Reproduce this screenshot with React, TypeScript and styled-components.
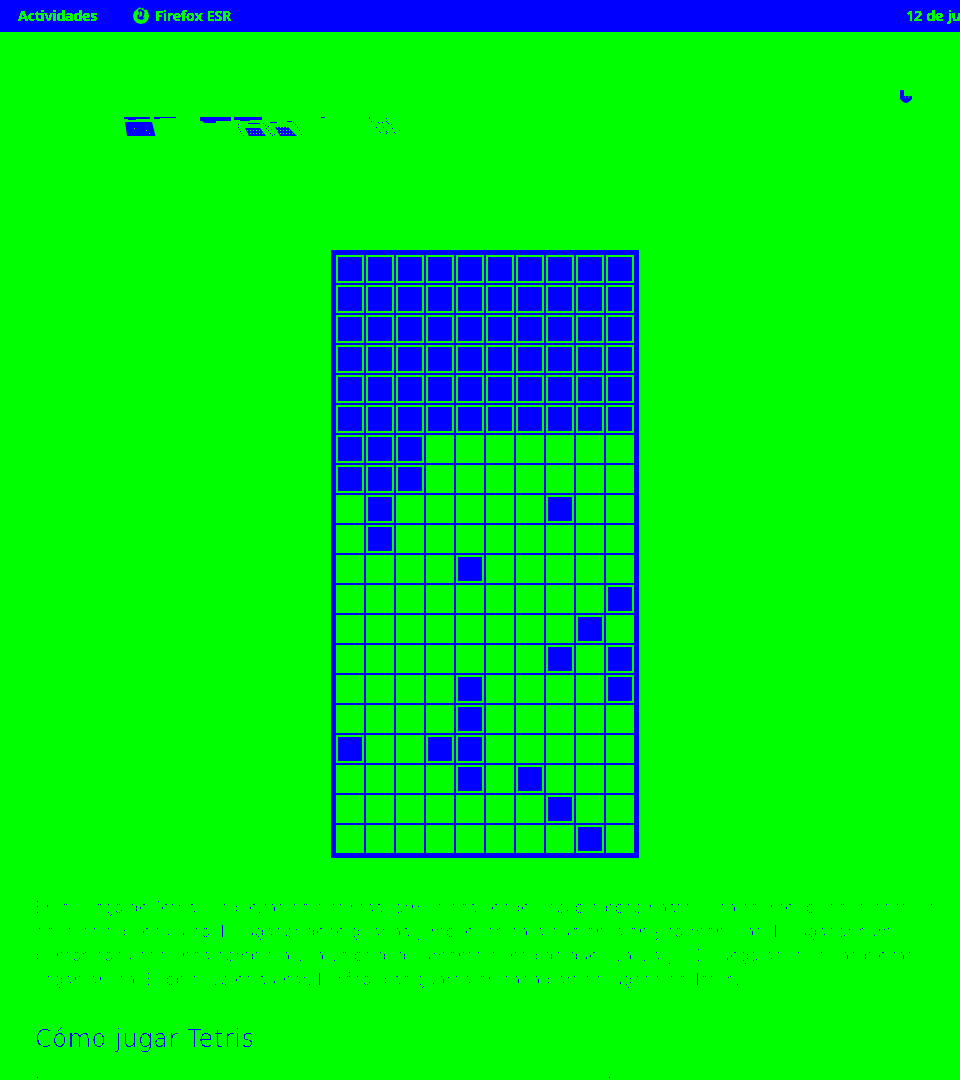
import React from "react";
import styled, { createGlobalStyle } from "styled-components";

const Global = createGlobalStyle`
  html, body { margin: 0; padding: 0; height: 1080px; overflow: hidden; background: #00ff00; }
  body { font-family: "DejaVu Sans", "Noto Sans", sans-serif; }
`;

const FilterDefs = styled.svg`
  display: block;
  width: 0;
  height: 0;
`;

const Page = styled.div`
  width: 960px;
  height: 1080px;
  overflow: hidden;
  background: #00ff00;
`;

const TopBar = styled.header`
  display: flex;
  align-items: center;
  height: 32px;
  padding: 0 0 2px 18px;
  box-sizing: border-box;
  background: #0000ff;
  overflow: hidden;
  white-space: nowrap;
`;

const BarLabel = styled.span`
  font-family: "Noto Sans", sans-serif;
  font-size: 14.3px;
  font-weight: 700;
  letter-spacing: -0.3px;
  word-spacing: 1px;
  color: #00ff00;
  filter: url(#bar-threshold);
`;

const AppMenu = styled.div`
  display: flex;
  align-items: center;
  gap: 6px;
  margin-left: 36px;
`;

const Clock = styled(BarLabel)`
  margin-left: 675px;
`;

const HeroArt = styled.svg`
  display: block;
  width: 960px;
  height: 218px;
`;

const BoardRow = styled.div`
  display: flex;
  justify-content: center;
  padding-left: 10px;
`;

const Board = styled.div`
  display: grid;
  grid-template-columns: repeat(10, 28px);
  grid-auto-rows: 28px;
  gap: 2px;
  border: 5px solid #0000ff;
  background: #0000ff;
`;

const Cell = styled.div<{ $filled: boolean }>`
  box-sizing: border-box;
  background: ${(p) => (p.$filled ? "#0000ff" : "#00ff00")};
  border: 2px solid #00ff00;
`;

const Article = styled.article`
  padding: 38px 16px 0 35px;
  color: #0000ff;
`;

const Paragraph = styled.p`
  margin: 0;
  font-size: 16px;
  line-height: 24px;
  font-weight: 200;
  filter: url(#copy-threshold);
`;

const Heading = styled.h2`
  margin: 29px 0 0;
  font-size: 24px;
  line-height: 36px;
  font-weight: 200;
  letter-spacing: 0.6px;
  filter: url(#heading-threshold);
`;

const NextParagraph = styled(Paragraph)`
  margin-top: 15px;
`;

const filled: Record<number, number[]> = {
  0: [0, 1, 2, 3, 4, 5, 6, 7, 8, 9],
  1: [0, 1, 2, 3, 4, 5, 6, 7, 8, 9],
  2: [0, 1, 2, 3, 4, 5, 6, 7, 8, 9],
  3: [0, 1, 2, 3, 4, 5, 6, 7, 8, 9],
  4: [0, 1, 2, 3, 4, 5, 6, 7, 8, 9],
  5: [0, 1, 2, 3, 4, 5, 6, 7, 8, 9],
  6: [0, 1, 2],
  7: [0, 1, 2],
  8: [1, 7],
  9: [1],
  10: [4],
  11: [9],
  12: [8],
  13: [7, 9],
  14: [4, 9],
  15: [4],
  16: [0, 3, 4],
  17: [4, 6],
  18: [7],
  19: [8],
};

const Threshold = ({ id, table }: { id: string; table: string }) => (
  <filter id={id} colorInterpolationFilters="sRGB" x="0" y="0" width="100%" height="100%">
    <feComponentTransfer>
      <feFuncA type="discrete" tableValues={table} />
    </feComponentTransfer>
  </filter>
);

const dots = (list: [number, number][]) =>
  list.map(([x, y], i) => <rect key={i} x={x} y={y} width="1" height="1" />);

const FoxIcon = () => (
  <svg width="16" height="17" viewBox="0 0 16 17" aria-hidden="true">
    <path
      fill="#00ff00"
      d="M5 1.5 L7 0 L8 2 L10 0.5 L11 3 L13.5 2.5 L15 5 L16 9 L15 13 L12 16 L8 17 L4 16 L1 13 L0 9 L1 5 L3 3 Z"
    />
    <path fill="#0000ff" d="M5 3 L7 2 L10 3 L11.5 5 L11 8.5 L10 10.5 L12 11 L9 13 L5 12 L4 9 L6 7 Z" />
    <path fill="#00ff00" d="M7 4 L9 5 L9 9 L6 10 L6.5 7.5 Z" />
  </svg>
);

export default function App() {
  return (
    <Page>
      <Global />
      <FilterDefs aria-hidden="true">
        <defs>
          <Threshold id="bar-threshold" table="0 1 1 1" />
          <Threshold id="copy-threshold" table="0 0 0 1" />
          <Threshold id="heading-threshold" table="0 1" />
        </defs>
      </FilterDefs>
      <TopBar>
        <BarLabel>Actividades</BarLabel>
        <AppMenu>
          <FoxIcon />
          <BarLabel>Firefox ESR</BarLabel>
        </AppMenu>
        <Clock>12 de jul 10:24</Clock>
      </TopBar>
      <HeroArt viewBox="0 0 960 218" aria-hidden="true" fill="#0000ff">
        <defs>
          <pattern id="dither" width="3" height="3" patternUnits="userSpaceOnUse">
            <path d="M0 0H3V3H0Z" />
            <rect x="1" y="1" width="1" height="1" fill="#00ff00" />
          </pattern>
        </defs>
        <g transform="translate(0 -32)">
          <path d="M124 117H150V119H136V120H128V119H124Z" />
          <path d="M154 117H176V118H160V119H154Z" />
          <path d="M125 122H152L155.5 136H127Z" />
          <rect x="134" y="128" width="1" height="1" fill="#00ff00" />
          <rect x="146" y="130" width="1" height="1" fill="#00ff00" />
          <rect x="149" y="133" width="1" height="1" fill="#00ff00" />
          <path d="M200 117H231V121H216V123H204L202 121H200Z" />
          <path d="M234 117H262V120H250V121H240V120H234Z" />
          <path d="M248 123H260V124H248ZM270 122H277V123H270ZM287 121H292V122H287ZM321 117H325V118H321Z" />
          <path fill="url(#dither)" d="M245 128H260L266 136H249ZM275 127H288L297 136H280Z" />
          {dots([
            [238, 124], [238, 127], [239, 129], [240, 131], [241, 133], [243, 135],
            [263, 123], [265, 125], [266, 128], [268, 130], [270, 133], [272, 135],
            [268, 126], [271, 129], [274, 134], [293, 122], [295, 124], [297, 127],
            [299, 130], [301, 134], [369, 117], [369, 118], [371, 121], [378, 122],
            [379, 123], [382, 122], [386, 118], [386, 121], [387, 122], [388, 123],
            [391, 124], [376, 127], [383, 127], [392, 128], [379, 131], [380, 132],
            [386, 131], [387, 132], [394, 132], [399, 130], [386, 133], [395, 133],
          ])}
        </g>
        <path
          transform="translate(900 58)"
          fillRule="evenodd"
          d="M0 0H4V6H12V9L10 11L7 13H5L2 11L0 9ZM5 6.5H6V7.5H5ZM8 6.5H9V7.5H8Z"
        />
      </HeroArt>
      <BoardRow>
        <Board>
          {Array.from({ length: 20 }, (_, row) =>
            Array.from({ length: 10 }, (_, col) => (
              <Cell key={`${row}-${col}`} $filled={filled[row].includes(col)} />
            ))
          )}
        </Board>
      </BoardRow>
      <Article>
        <Paragraph>
          En el juego de Tetris, las piezas de distintas formas descienden poco a poco hasta la parte inferior de la
          pantalla de la partida en curso. El jugador debe girarlas y moverlas para que encajen y formen
          filas. El jugador suma puntos con cada línea completa y la velocidad aumenta a medida que avanza ya. El
          juego acaba si las piezas llegan arriba. El objetivo es sumar. El récord se guarda en cada partida jugada de Tetris.
        </Paragraph>
        <Heading>Cómo jugar Tetris</Heading>
        <NextParagraph>
          Es muy sencillo: usa las flechas del teclado para mover las piezas y la flecha de arriba para girarlas.
        </NextParagraph>
      </Article>
    </Page>
  );
}
